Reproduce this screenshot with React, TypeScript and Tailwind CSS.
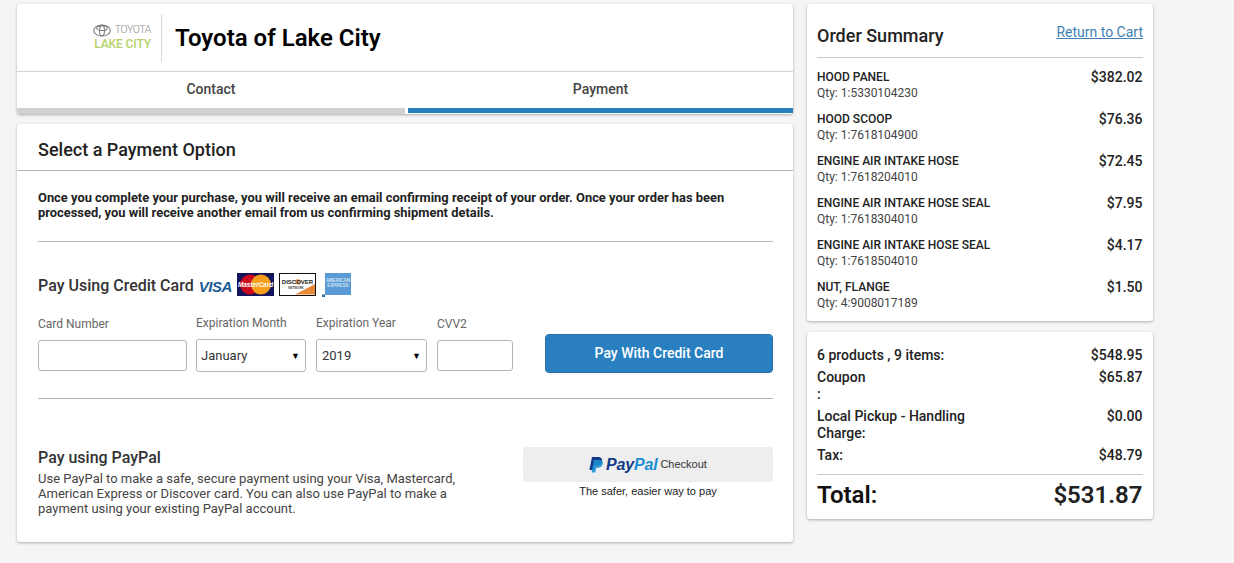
const font = { fontFamily: "Roboto, sans-serif" };

const items = [
  { name: "HOOD PANEL", qty: "Qty: 1:5330104230", price: "$382.02" },
  { name: "HOOD SCOOP", qty: "Qty: 1:7618104900", price: "$76.36" },
  { name: "ENGINE AIR INTAKE HOSE", qty: "Qty: 1:7618204010", price: "$72.45" },
  { name: "ENGINE AIR INTAKE HOSE SEAL", qty: "Qty: 1:7618304010", price: "$7.95" },
  { name: "ENGINE AIR INTAKE HOSE SEAL", qty: "Qty: 1:7618504010", price: "$4.17" },
  { name: "NUT, FLANGE", qty: "Qty: 4:9008017189", price: "$1.50" },
];

function ToyotaLogo() {
  return (
    <div className="flex flex-col items-end w-[58px]">
      <div className="flex items-center gap-[4px] h-[13px]">
        <svg width="18" height="13" viewBox="0 0 19 13" fill="none" stroke="#777" strokeWidth="1.1">
          <ellipse cx="9.5" cy="6.5" rx="8.8" ry="5.7" />
          <ellipse cx="9.5" cy="6.5" rx="2.6" ry="5.7" />
          <ellipse cx="9.5" cy="4" rx="5.6" ry="2.6" />
        </svg>
        <span className="text-[10.5px] leading-none font-light text-[#8a8a8a] tracking-[-0.4px]">TOYOTA</span>
      </div>
      <span className="text-[12.2px] leading-[14px] text-[#b5d36b] font-medium whitespace-nowrap tracking-[-0.2px]">LAKE CITY</span>
    </div>
  );
}

function CardLogos() {
  return (
    <div className="flex items-center ml-[5px] mb-[3px] gap-[5px]">
      <span className="w-[33px] text-[15px] leading-none italic font-black text-[#1a5a96] tracking-[-0.5px] mt-[3px]" style={{ fontFamily: "'Liberation Sans', sans-serif" }}>
        VISA
      </span>
      <svg width="37" height="23" viewBox="0 0 37 23">
        <rect width="37" height="23" fill="#14145c" />
        <circle cx="13" cy="11.5" r="10" fill="#cc0a1f" />
        <circle cx="24" cy="11.5" r="10" fill="#f79e1b" />
        <text x="18.5" y="14" textAnchor="middle" fontSize="6.4" fontWeight="700" fontStyle="italic" fill="#fff" fontFamily="Liberation Sans">MasterCard</text>
      </svg>
      <svg width="37" height="23" viewBox="0 0 37 23">
        <rect x="0.5" y="0.5" width="36" height="22" fill="#fff" stroke="#111" />
        <path d="M16 21.5 L36 21.5 L36 11 Z" fill="#e98a3b" />
        <circle cx="18.8" cy="8.800" r="2.800" fill="#e98a3b" opacity="0.75" />
        <text x="18.5" y="11" textAnchor="middle" fontSize="6" fontWeight="700" fill="#222" fontFamily="Liberation Sans">DISCOVER</text>
        <text x="17" y="15.500" textAnchor="middle" fontSize="3" fontWeight="700" fill="#444" fontFamily="Liberation Sans">NETWORK</text>
      </svg>
      <svg width="29" height="24" viewBox="0 0 29 24" className="ml-[1px]">
        <rect x="3" y="0" width="26" height="22" fill="#5a9bd5" />
        <text x="16" y="9" textAnchor="middle" fontSize="4.500" fontWeight="700" fill="#cfe3f4" fontFamily="Liberation Sans">AMERICAN</text>
        <text x="16" y="14" textAnchor="middle" fontSize="4.500" fontWeight="700" fill="#cfe3f4" fontFamily="Liberation Sans">EXPRESS</text>
        <rect x="0" y="21.5" width="3" height="2.5" fill="#2d6fa8" />
      </svg>
    </div>
  );
}

function PayPalLogo() {
  return (
    <div className="flex items-center gap-[3px]">
      <svg width="14" height="16" viewBox="0 0 14 16">
        <path d="M3 0h6c3 0 4.600 1.600 4 4.400-.6 2.800-2.600 4.200-5.400 4.200H5.400L4.400 13H.4z" fill="#123a86" />
        <path d="M4.800 3h6c2.400 0 3.500 1.500 3 3.800-.6 2.600-2.300 3.900-5 3.900H7.200L6.300 15.400H2.600z" fill="#1b90d2" opacity="0.9" />
      </svg>
      <span className="text-[16px] leading-none italic font-black tracking-[-0.2px]" style={{ fontFamily: "'Liberation Sans', sans-serif" }}>
        <span className="text-[#123a86]">Pay</span>
        <span className="text-[#1b90d2]">Pal</span>
      </span>
    </div>
  );
}

function TotalRow({ label, value, labelClass = "" }: { label: React.ReactNode; value: string; labelClass?: string }) {
  return (
    <div className="flex justify-between items-start text-[14px] leading-[17px] font-medium text-[#222]">
      <span className={labelClass}>{label}</span>
      <span>{value}</span>
    </div>
  );
}

export default function App() {
  return (
    <div className="w-[1234px] h-[563px] overflow-hidden bg-[#f5f5f5] flex items-start gap-[14px] pl-[17px] pt-[4px]" style={font}>
      {/* Left column */}
      <div className="w-[776px] flex flex-col gap-[10px]">
        <div className="bg-white rounded-[3px] shadow-[0_1px_3px_rgba(0,0,0,0.3)]">
          <div className="h-[68px] flex items-center pl-[76px] border-b border-[#d4d4d4]">
            <ToyotaLogo />
            <div className="w-px h-[48px] bg-[#d8d8d8] ml-[10px] mr-[13px]" />
            <span className="text-[24px] leading-none font-semibold text-black">Toyota of Lake City</span>
          </div>
          <div className="flex">
            <div className="w-[388px]">
              <div className="h-[36px] flex items-center justify-center pb-[2px] text-[14px] font-medium text-[#444]">Contact</div>
              <div className="h-[6px] bg-[#d0d0d0] rounded-bl-[3px]" />
            </div>
            <div className="ml-[3px] flex-1">
              <div className="h-[36px] flex items-center justify-center pb-[2px] text-[14px] font-medium text-[#444]">Payment</div>
              <div className="h-[5px] bg-[#2a7fc1]" />
            </div>
          </div>
        </div>

        <div className="bg-white rounded-[3px] shadow-[0_1px_3px_rgba(0,0,0,0.3)] h-[418px]">
          <div className="h-[47px] flex items-center pl-[21px] pt-[5px] border-b border-[#b5b5b5] text-[18px] font-medium text-[#222]">
            Select a Payment Option
          </div>
          <div className="pl-[21px] pr-[20px]">
            <p className="mt-[19px] text-[12.9px] leading-[15px] font-bold text-[#222] h-[51px]">
              Once you complete your purchase, you will receive an email confirming receipt of your order. Once your order has been
              <br />
              processed, you will receive another email from us confirming shipment details.
            </p>
            <div className="h-px bg-[#b8b8b8]" />

            <div className="flex items-center mt-[32px] h-[24px]">
              <span className="text-[16px] font-medium text-[#333]">Pay Using Credit Card</span>
              <CardLogos />
            </div>

            <div className="flex items-end mt-[18px]">
              <label className="w-[149px] mb-[1px] flex flex-col gap-[9px] text-[12px] leading-[14px] text-[#666]">
                Card Number
                <div className="h-[31px] bg-white border border-[#b5b5b5] rounded-[3px]" />
              </label>
              <label className="w-[110px] ml-[9px] flex flex-col gap-[9px] text-[12px] leading-[14px] text-[#666]">
                Expiration Month
                <div className="h-[33px] bg-white border border-[#b5b5b5] rounded-[3px] flex items-center justify-between pl-[4px] pr-[5px] text-[13px] text-[#333]">
                  January
                  <span className="text-[9px] text-black">▼</span>
                </div>
              </label>
              <label className="w-[111px] ml-[10px] flex flex-col gap-[9px] text-[12px] leading-[14px] text-[#666]">
                Expiration Year
                <div className="h-[33px] bg-white border border-[#b5b5b5] rounded-[3px] flex items-center justify-between pl-[5px] pr-[5px] text-[13px] text-[#333]">
                  2019
                  <span className="text-[9px] text-black">▼</span>
                </div>
              </label>
              <label className="w-[76px] ml-[10px] mb-[1px] flex flex-col gap-[9px] text-[12px] leading-[14px] text-[#666]">
                CVV2
                <div className="h-[31px] bg-white border border-[#b5b5b5] rounded-[3px]" />
              </label>
              <button className="w-[228px] h-[39px] ml-[32px] mb-[-1px] rounded-[4px] bg-[#2a7fc1] border border-[#2471ad] text-white text-[14px] font-medium">
                Pay With Credit Card
              </button>
            </div>

            <div className="h-px bg-[#b0b0b0] mt-[26px]" />

            <div className="flex justify-between mt-[48px]">
              <div className="w-[440px]">
                <div className="text-[16px] leading-[19px] font-medium text-[#333] mt-[1px]">Pay using PayPal</div>
                <p className="mt-[4px] text-[13px] leading-[15px] text-[#444]">
                  Use PayPal to make a safe, secure payment using your Visa, Mastercard,
                  <br />
                  American Express or Discover card. You can also use PayPal to make a
                  <br />
                  payment using your existing PayPal account.
                </p>
              </div>
              <div className="w-[250px] flex flex-col items-center">
                <div className="w-full h-[35px] bg-[#eeeeee] rounded-[4px] flex items-center justify-center gap-[3px]">
                  <PayPalLogo />
                  <span className="text-[11px] text-[#333]" style={{ fontFamily: "'Liberation Sans', sans-serif" }}>Checkout</span>
                </div>
                <span className="mt-[3px] text-[11px] leading-[13px] text-[#222]" style={{ fontFamily: "'Liberation Sans', sans-serif" }}>
                  The safer, easier way to pay
                </span>
              </div>
            </div>
          </div>
        </div>
      </div>

      {/* Right column */}
      <div className="w-[346px] flex flex-col gap-[11px]">
        <div className="bg-white rounded-[3px] shadow-[0_1px_3px_rgba(0,0,0,0.3)] h-[317px] px-[10px]">
          <div className="flex justify-between h-[54px] border-b border-[#c8c8c8]">
            <span className="mt-[21px] text-[18px] leading-[21px] font-medium text-[#222]">Order Summary</span>
            <a className="mt-[20px] text-[14px] leading-[16px] text-[#3f7fb5] underline">Return to Cart</a>
          </div>
          <div className="pt-[12px] flex flex-col gap-[10px]">
            {items.map((item, i) => (
              <div key={i} className="flex justify-between h-[32px]">
                <div>
                  <div className="text-[12px] leading-[15px] font-medium text-[#222]">{item.name}</div>
                  <div className="text-[12px] leading-[17px] text-[#444]">{item.qty}</div>
                </div>
                <span className="text-[14px] leading-[15px] font-medium text-[#222] mr-[0.5px]">{item.price}</span>
              </div>
            ))}
          </div>
        </div>

        <div className="bg-white rounded-[3px] shadow-[0_1px_3px_rgba(0,0,0,0.3)] h-[187px] px-[10px] pt-[15px]">
          <div className="pr-[0.5px] flex flex-col gap-[5px]">
            <TotalRow label="6 products , 9 items:" value="$548.95" />
            <TotalRow label={<>Coupon<br />:</>} value="$65.87" />
            <TotalRow label="Local Pickup - Handling Charge:" value="$0.00" labelClass="w-[160px]" />
            <TotalRow label="Tax:" value="$48.79" />
          </div>
          <div className="mt-[10px] border-t border-[#c8c8c8] flex justify-between items-center h-[40px] pr-[0.5px] font-semibold text-[#222]">
            <span className="text-[24px] text-[#111]">Total:</span>
            <span className="text-[24px]">$531.87</span>
          </div>
        </div>
      </div>
    </div>
  );
}
